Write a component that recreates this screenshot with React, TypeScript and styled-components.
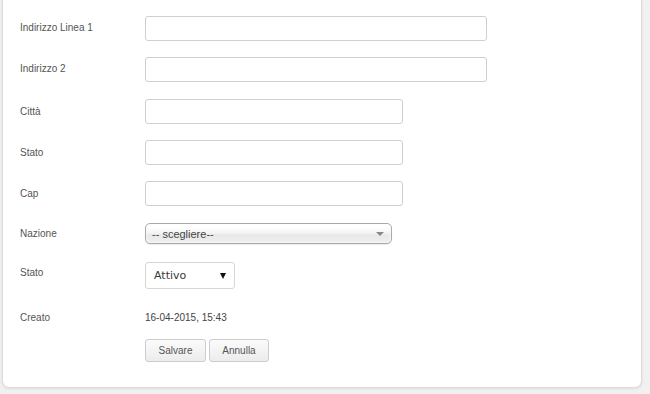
import React from 'react';
import styled, { createGlobalStyle } from 'styled-components';

const GlobalStyle = createGlobalStyle`
  html, body {
    margin: 0;
    padding: 0;
    background: #f1f1f1;
    font-family: "Liberation Sans", Arial, sans-serif;
  }
`;

const Page = styled.div`
  width: 650px;
  height: 394px;
  overflow: hidden;
  box-sizing: border-box;
  padding: 0 8px 0 2px;
`;

const Card = styled.div`
  background: #ffffff;
  border: 1px solid #dcdcdc;
  border-top: none;
  border-radius: 0 0 7px 7px;
  box-shadow: 0 1px 3px rgba(0, 0, 0, 0.08);
  padding: 16px 0 25px 17px;
`;

const Row = styled.div<{ $mb?: number; $h?: number }>`
  display: flex;
  align-items: center;
  height: ${(p) => p.$h ?? 25}px;
  margin-bottom: ${(p) => p.$mb ?? 16.25}px;
`;

const Label = styled.div<{ $shift?: number }>`
  width: 125px;
  flex-shrink: 0;
  font-size: 10px;
  color: #555555;
  position: relative;
  top: ${(p) => p.$shift ?? 0}px;
`;

const TextInput = styled.input<{ $w: number }>`
  box-sizing: border-box;
  width: ${(p) => p.$w}px;
  height: 25px;
  margin: 0;
  padding: 3px 6px;
  border: 1px solid #cfcfcf;
  border-radius: 3px;
  background: #ffffff;
  font-family: "Liberation Sans", Arial, sans-serif;
  font-size: 12px;
  outline: none;
`;

const ChosenSelect = styled.div`
  box-sizing: border-box;
  width: 247px;
  height: 21px;
  display: flex;
  align-items: center;
  justify-content: space-between;
  padding: 0 7px 0 6px;
  border: 1px solid #aaaaaa;
  border-radius: 5px;
  background: linear-gradient(#ffffff 20%, #f2f2f2 50%, #e8e8e8 52%, #eeeeee 100%);
  box-shadow: 0 0 3px #ffffff inset, 0 1px 1px rgba(0, 0, 0, 0.08);
  font-size: 11px;
  color: #444444;
`;

const SmallArrow = styled.span`
  width: 0;
  height: 0;
  border-left: 4px solid transparent;
  border-right: 4px solid transparent;
  border-top: 4px solid #888888;
`;

const StatusSelect = styled.div`
  box-sizing: border-box;
  width: 90px;
  height: 27px;
  display: flex;
  align-items: center;
  justify-content: space-between;
  padding: 0 8px 0 8px;
  border: 1px solid #d6d6d6;
  border-radius: 3px;
  background: #ffffff;
  font-family: "DejaVu Sans", Verdana, sans-serif;
  font-size: 11px;
  color: #3a3a3a;
`;

const BlackArrow = styled.span`
  width: 0;
  height: 0;
  border-left: 3px solid transparent;
  border-right: 3px solid transparent;
  border-top: 6px solid #111111;
`;

const Value = styled.div`
  font-size: 10px;
  color: #444444;
`;

const Buttons = styled.div`
  display: flex;
  gap: 3px;
  margin-left: 125px;
`;

const Button = styled.button<{ $w: number }>`
  box-sizing: border-box;
  width: ${(p) => p.$w}px;
  height: 23px;
  padding: 0;
  border: 1px solid #cccccc;
  border-radius: 3px;
  background: linear-gradient(#fbfbfb, #ececec);
  font-family: "Liberation Sans", Arial, sans-serif;
  font-size: 10px;
  color: #555555;
  cursor: pointer;
`;

const App: React.FC = () => {
  return (
    <>
      <GlobalStyle />
      <Page>
        <Card>
          <Row>
            <Label $shift={-1}>Indirizzo Linea 1</Label>
            <TextInput $w={342} />
          </Row>
          <Row>
            <Label $shift={-1}>Indirizzo 2</Label>
            <TextInput $w={342} />
          </Row>
          <Row>
            <Label>Città</Label>
            <TextInput $w={258} />
          </Row>
          <Row>
            <Label>Stato</Label>
            <TextInput $w={258} />
          </Row>
          <Row $mb={17}>
            <Label>Cap</Label>
            <TextInput $w={258} />
          </Row>
          <Row $h={21} $mb={18}>
            <Label>Nazione</Label>
            <ChosenSelect>
              <span>-- scegliere--</span>
              <SmallArrow />
            </ChosenSelect>
          </Row>
          <Row $h={27} $mb={16}>
            <Label $shift={-3}>Stato</Label>
            <StatusSelect>
              <span>Attivo</span>
              <BlackArrow />
            </StatusSelect>
          </Row>
          <Row $mb={9}>
            <Label>Creato</Label>
            <Value>16-04-2015, 15:43</Value>
          </Row>
          <Buttons>
            <Button $w={61}>Salvare</Button>
            <Button $w={60}>Annulla</Button>
          </Buttons>
        </Card>
      </Page>
    </>
  );
};

export default App;
